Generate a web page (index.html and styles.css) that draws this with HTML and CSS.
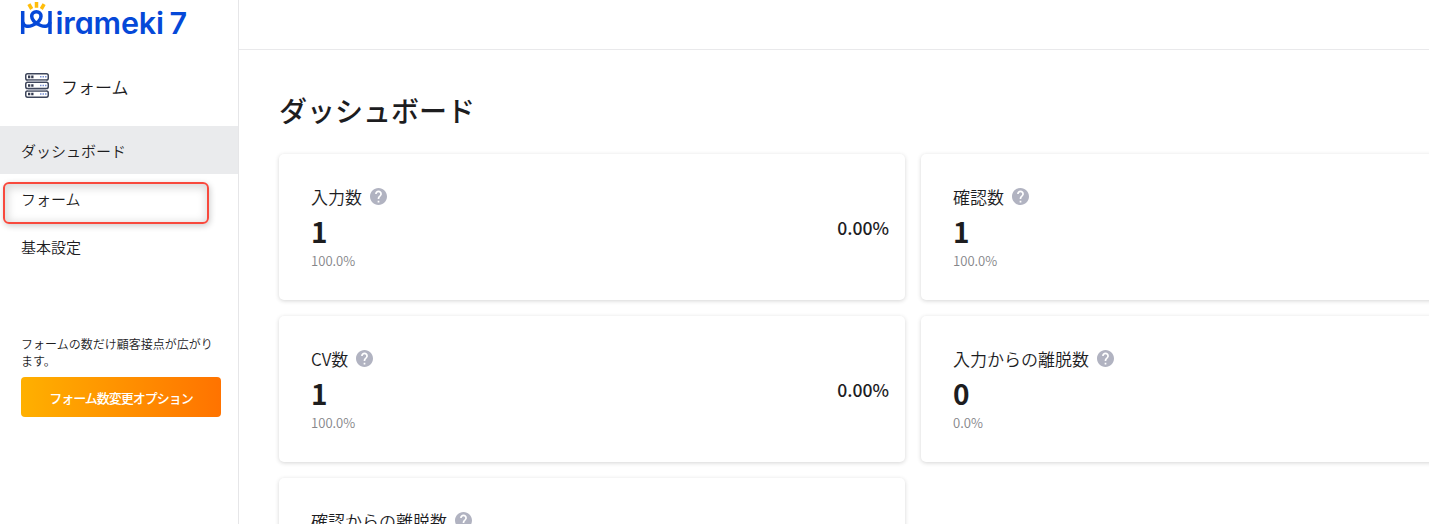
FILE: index.html
```html
<!DOCTYPE html>
<html lang="ja">
<head>
<meta charset="utf-8">
<title>ダッシュボード</title>
<link rel="stylesheet" href="styles.css">
</head>
<body>
<svg width="0" height="0" class="defs" aria-hidden="true">
  <symbol id="help" viewBox="2 2 20 20"><path fill="#b1b3c1" d="M12 2C6.48 2 2 6.48 2 12s4.48 10 10 10 10-4.480 10-10S17.520 2 12 2zm1 17h-2v-2h2v2zm2.070-7.750l-.9.920C13.450 12.900 13 13.500 13 15h-2v-.5c0-1.100.450-2.100 1.170-2.830l1.240-1.260c.370-.360.590-.860.590-1.410 0-1.100-.9-2-2-2s-2 .9-2 2H8c0-2.210 1.790-4 4-4s4 1.790 4 4c0 .880-.360 1.680-.930 2.250z"/></symbol>
</svg>
<div class="app">
  <aside class="sidebar">
    <svg class="logo" width="170" height="40" viewBox="20 0 170 40">
      <g fill="none" stroke="#0548d8" stroke-width="3.500">
        <path d="M22.700 11V34M50 11V34"/>
        <path d="M22.700 22C23.500 26.500 28 27.200 32 25.500C37 23.500 41 20.500 41 16.300C41 13.500 39.200 11.700 36.400 11.700S31.700 13.500 31.700 16.300C31.700 20.500 35.700 23.500 40.700 25.500C44.700 27.200 49.200 26.500 50 22"/>
      </g>
      <g stroke="#ffbd0a" stroke-width="3.500"><path d="M28.900 4.200L31.700 9M36.500 2V7.800M44.100 4.200L41.300 9"/></g>
      <text class="logo-text" x="55.500" y="34" textLength="108.500" lengthAdjust="spacing">irameki</text>
      <text class="logo-text" x="169.500" y="34">7</text>
    </svg>
    <div class="product">
      <svg width="24" height="25" viewBox="0 0 24 25">
        <g fill="#fff" stroke="#3e465b" stroke-width="1.500">
          <rect x=".75" y=".75" width="22.500" height="6.200" rx="1.800"/>
          <rect x=".75" y="9.350" width="22.500" height="6.200" rx="1.800"/>
          <rect x=".75" y="17.950" width="22.500" height="6.200" rx="1.800"/>
        </g>
        <path d="M3 8.150h18M3 16.750h18" stroke="#a7abb8" stroke-width="1.400"/>
        <path d="M3 3.850h2.300m.9 0h2.300M3 12.450h2.300m.9 0h2.300M3 21.050h2.300m.9 0h2.300" stroke="#343b50" stroke-width="2.600"/>
        <path d="M15 3.850h1.500m1 0h1.500m1 0h1.500M15 12.450h1.500m1 0h1.500m1 0h1.500M15 21.050h1.500m1 0h1.500m1 0h1.500" stroke="#7890d3" stroke-width="1.500"/>
      </svg>
      <span>フォーム</span>
    </div>
    <nav class="nav">
      <a class="nav-item active">ダッシュボード</a>
      <a class="nav-item marked">フォーム</a>
      <a class="nav-item">基本設定</a>
    </nav>
    <div class="promo">
      <p class="promo-text">フォームの数だけ顧客接点が広がります。</p>
      <a class="promo-button">フォーム数変更オプション</a>
    </div>
  </aside>
  <main class="main">
    <header class="topbar"></header>
    <section class="content">
      <h1 class="title">ダッシュボード</h1>
      <div class="cards">
        <article class="card">
          <div><h2 class="label">入力数<svg class="help"><use href="#help"/></svg></h2><div class="value">1</div><div class="share">100.0%</div></div>
          <div class="rate">0.00%</div>
        </article>
        <article class="card">
          <div><h2 class="label">確認数<svg class="help"><use href="#help"/></svg></h2><div class="value">1</div><div class="share">100.0%</div></div>
        </article>
        <article class="card">
          <div><h2 class="label">CV数<svg class="help"><use href="#help"/></svg></h2><div class="value">1</div><div class="share">100.0%</div></div>
          <div class="rate">0.00%</div>
        </article>
        <article class="card">
          <div><h2 class="label">入力からの離脱数<svg class="help"><use href="#help"/></svg></h2><div class="value">0</div><div class="share">0.0%</div></div>
        </article>
        <article class="card">
          <div><h2 class="label">確認からの離脱数<svg class="help"><use href="#help"/></svg></h2></div>
        </article>
      </div>
    </section>
  </main>
</div>
</body>
</html>
```
FILE: styles.css
```css
*, *::after { box-sizing: border-box; }
body { margin: 0; overflow: hidden; background: #fff; color: #1d1d1f; font-family: "Noto Sans CJK JP", sans-serif; font-weight: 350; }
.defs { position: absolute; }
.app { display: flex; height: 524px; overflow: hidden; }
.sidebar { width: 239px; flex: none; border-right: 1px solid #e6e6e8; }
.logo { display: block; margin-left: 20px; }
.logo-text { font-family: Inter, sans-serif; font-size: 30.5px; font-weight: 600; font-feature-settings: "cv11"; fill: #0548d8; }
.product { display: flex; align-items: center; gap: 12px; height: 86px; padding: 6px 0 0 25px; font-size: 17px; }
.product svg { margin-bottom: 2px; }
.product span { line-height: 24px; padding-top: 2px; }
.nav-item { display: block; height: 48px; padding-left: 21px; font-size: 15px; line-height: 50px; }
.active { background: #eaebed; }
.marked { position: relative; }
.marked::after { content: ""; position: absolute; left: 2.5px; top: 7.5px; width: 206px; height: 42px; border: 2px solid #f8493d; border-radius: 6px; box-shadow: 1px 2px 6px rgba(0,0,0,.2), inset 1px 2px 8px 2px rgba(0,0,0,.15); }
.promo { padding: 65px 17px 0 21px; }
.promo-text { margin: 0; width: 200px; font-size: 12px; line-height: 17px; }
.promo-button { display: block; margin-top: 8px; height: 40px; border-radius: 4px; background: linear-gradient(90deg, #ffb000, #ff7300); color: #fff; font-size: 13px; letter-spacing: -1px; line-height: 41px; font-weight: 500; text-align: center; }
.main { flex: 1; min-width: 0; overflow: hidden; }
.topbar { height: 50px; border-bottom: 1px solid #e9e9eb; }
.content { padding: 39px 0 0 40px; }
.title { margin: 0 0 23px; font-size: 28px; line-height: 42px; font-weight: 500; }
.cards { display: grid; grid-template-columns: 626px 626px; grid-auto-rows: 146px; gap: 16px; }
.card { display: flex; justify-content: space-between; padding: 30px 16px 0 32px; border-radius: 5px; background: #fff; box-shadow: 0 1px 4px rgba(0,0,0,.17); }
.label { display: flex; align-items: center; gap: 8px; margin: 0; font-size: 17px; line-height: 25px; font-weight: 350; }
.help { width: 17px; height: 17px; }
.value { font-size: 28px; line-height: 40px; margin-top: 2px; font-weight: 700; }
.share { font-size: 13.1px; line-height: 19px; color: #858589; }
.rate { margin-top: 30px; font-size: 17.6px; line-height: 27px; font-weight: 500; }
```
